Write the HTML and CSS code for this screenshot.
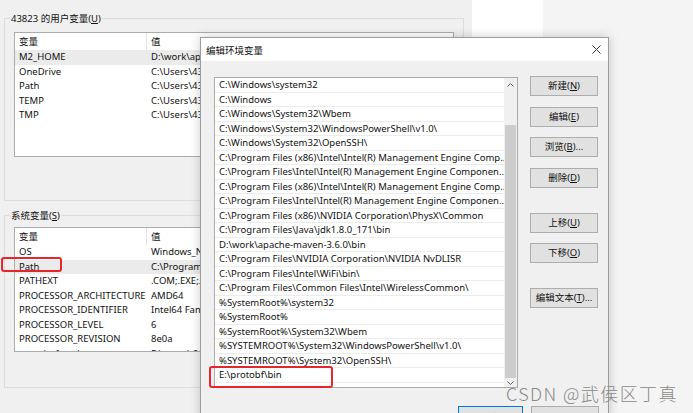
FILE: index.html
```html
<!DOCTYPE html>
<html lang="zh-CN">
<head>
<meta charset="utf-8">
<title>编辑环境变量</title>
<link rel="stylesheet" href="styles.css">
</head>
<body>
<div class="desktop">
  <div class="bg-window">
    <section class="group group-user">
      <span class="group-label">43823 的用户变量(<u>U</u>)</span>
      <div class="var-list var-list-user">
        <div class="var-head"><span class="c1">变量</span><span class="c2">值</span></div>
        <div class="var-row sel"><span class="c1">M2_HOME</span><span class="c2">D:\work\apache-maven-3.6.0</span></div>
        <div class="var-row"><span class="c1">OneDrive</span><span class="c2">C:\Users\43823\OneDrive</span></div>
        <div class="var-row"><span class="c1">Path</span><span class="c2">C:\Users\43823\AppData\Local\Microsoft\WindowsApps</span></div>
        <div class="var-row"><span class="c1">TEMP</span><span class="c2">C:\Users\43823\AppData\Local\Temp</span></div>
        <div class="var-row"><span class="c1">TMP</span><span class="c2">C:\Users\43823\AppData\Local\Temp</span></div>
      </div>
    </section>
    <section class="group group-sys">
      <span class="group-label">系统变量(<u>S</u>)</span>
      <div class="var-list var-list-sys">
        <div class="var-head"><span class="c1">变量</span><span class="c2">值</span></div>
        <div class="var-row"><span class="c1">OS</span><span class="c2">Windows_NT</span></div>
        <div class="var-row sel"><span class="c1">Path</span><span class="c2">C:\Program Files (x86)\Intel\Intel(R) Management</span></div>
        <div class="var-row"><span class="c1">PATHEXT</span><span class="c2">.COM;.EXE;.BAT;.CMD;.VBS;.VBE</span></div>
        <div class="var-row"><span class="c1">PROCESSOR_ARCHITECTURE</span><span class="c2">AMD64</span></div>
        <div class="var-row"><span class="c1">PROCESSOR_IDENTIFIER</span><span class="c2">Intel64 Family 6 Model 158</span></div>
        <div class="var-row"><span class="c1">PROCESSOR_LEVEL</span><span class="c2">6</span></div>
        <div class="var-row"><span class="c1">PROCESSOR_REVISION</span><span class="c2">8e0a</span></div>
        <div class="var-row"><span class="c1">protobuf_path</span><span class="c2">E:\protobf\bin</span></div>
      </div>
    </section>
  </div>

  <div class="back-panel"></div>

  <div class="dialog">
    <div class="titlebar">
      <span class="title">编辑环境变量</span>
      <svg class="close" width="9" height="9" viewBox="0 0 9 9"><path d="M0.5 0.5L8.5 8.5M8.5 0.5L0.5 8.5" stroke="#333" stroke-width="1" fill="none"/></svg>
    </div>
    <div class="dlg-body">
      <div class="path-list">
        <div class="rows">
          <div class="row">C:\Windows\system32</div>
          <div class="row">C:\Windows</div>
          <div class="row">C:\Windows\System32\Wbem</div>
          <div class="row">C:\Windows\System32\WindowsPowerShell\v1.0\</div>
          <div class="row">C:\Windows\System32\OpenSSH\</div>
          <div class="row">C:\Program Files (x86)\Intel\Intel(R) Management Engine Comp...</div>
          <div class="row">C:\Program Files\Intel\Intel(R) Management Engine Componen...</div>
          <div class="row">C:\Program Files (x86)\Intel\Intel(R) Management Engine Comp...</div>
          <div class="row">C:\Program Files\Intel\Intel(R) Management Engine Componen...</div>
          <div class="row">C:\Program Files (x86)\NVIDIA Corporation\PhysX\Common</div>
          <div class="row">C:\Program Files\Java\jdk1.8.0_171\bin</div>
          <div class="row">D:\work\apache-maven-3.6.0\bin</div>
          <div class="row">C:\Program Files\NVIDIA Corporation\NVIDIA NvDLISR</div>
          <div class="row">C:\Program Files\Intel\WiFi\bin\</div>
          <div class="row">C:\Program Files\Common Files\Intel\WirelessCommon\</div>
          <div class="row">%SystemRoot%\system32</div>
          <div class="row">%SystemRoot%</div>
          <div class="row">%SystemRoot%\System32\Wbem</div>
          <div class="row">%SYSTEMROOT%\System32\WindowsPowerShell\v1.0\</div>
          <div class="row">%SYSTEMROOT%\System32\OpenSSH\</div>
          <div class="row row-edit">E:\protobf\bin</div>
        </div>
        <div class="scrollbar">
          <div class="sb-btn sb-up"><svg width="7" height="4" viewBox="0 0 7 4"><path d="M0.5 3.5L3.5 0.5L6.5 3.5" stroke="#606060" fill="none"/></svg></div>
          <div class="sb-track"><div class="sb-thumb"></div></div>
          <div class="sb-btn sb-down"><svg width="7" height="4" viewBox="0 0 7 4"><path d="M0.5 0.5L3.5 3.5L6.5 0.5" stroke="#606060" fill="none"/></svg></div>
        </div>
      </div>
      <div class="btn-col">
        <button class="btn">新建(<u>N</u>)</button>
        <button class="btn">编辑(<u>E</u>)</button>
        <button class="btn">浏览(<u>B</u>)...</button>
        <button class="btn">删除(<u>D</u>)</button>
        <button class="btn btn-sep">上移(<u>U</u>)</button>
        <button class="btn">下移(<u>O</u>)</button>
        <button class="btn btn-sep">编辑文本(<u>T</u>)...</button>
      </div>
    </div>
    <div class="dlg-footer">
      <button class="btn btn-ok">确定</button>
      <button class="btn btn-cancel">取消</button>
    </div>
  </div>

  <div class="mark mark-path"></div>
  <div class="mark mark-proto"></div>
  <div class="watermark">CSDN @武侯区丁真</div>
</div>
</body>
</html>
```

FILE: styles.css
```css
* { box-sizing: border-box; }
html, body { margin: 0; padding: 0; }
body {
  width: 693px;
  height: 413px;
  overflow: hidden;
  background: #f4f4f4;
  font-family: "Noto Sans", "Noto Sans CJK SC", sans-serif;
  font-size: 9.5px;
  color: #111;
}
.desktop { position: relative; width: 693px; height: 413px; overflow: hidden; }

/* background window */
.bg-window {
  position: absolute;
  left: 0; top: 0;
  width: 472px; height: 413px;
  background: #f0f0f0;
  padding: 18px 8px 0 4px;
  display: flex;
  flex-direction: column;
}
.back-panel {
  position: absolute;
  left: 472px; top: 0;
  width: 71px; height: 37px;
  background: #fff;
}
.group {
  border: 1px solid #dcdcdc;
  display: flex;
  flex-direction: column;
}
.group-user { height: 183px; }
.group-sys { height: 173px; margin-top: 14px; }
.group-label {
  align-self: flex-start;
  margin: -8px 0 0 5px;
  padding: 0 1px;
  background: #f0f0f0;
  line-height: 15px;
}
.var-list {
  margin: 6px 9px 0;
  background: #fff;
  border: 1px solid #ababab;
  height: 125px;
  overflow: hidden;
}
.group-sys .var-list { margin-top: 4px; }
.var-head, .var-row { display: flex; white-space: nowrap; }
.var-head { height: 17px; line-height: 17px; }
.var-row { height: 14.5px; line-height: 14.5px; }
.var-row.sel { background: #ebebeb; }
.c1 { width: 132px; padding-left: 4px; flex: none; overflow: hidden; }
.var-head .c1 { border-right: 1px solid #e3e3e3; }
.c2 { padding-left: 4px; width: 53px; flex: none; overflow: hidden; }

/* dialog */
.dialog {
  position: absolute;
  left: 200px; top: 37px;
  width: 409px; height: 400px;
  background: #f0f0f0;
  border: 1px solid #9c9c9c;
  box-shadow: 0 0 10px rgba(0, 0, 0, 0.2);
  display: flex;
  flex-direction: column;
}
.titlebar {
  height: 23px;
  flex: none;
  background: #fff;
  display: flex;
  align-items: center;
  justify-content: space-between;
  padding: 0 7px 0 5px;
}
.close { display: block; }
.dlg-body {
  display: flex;
  padding: 16px 9px 0 13px;
}
.path-list {
  width: 304px;
  height: 311px;
  flex: none;
  border: 1px solid #ababab;
  background: #fff;
  display: flex;
}
.rows { flex: 1; overflow: hidden; }
.row {
  height: 14.5px;
  line-height: 13.5px;
  border-bottom: 1px solid #ececec;
  padding-left: 4px;
  white-space: nowrap;
  overflow: hidden;
}
.scrollbar {
  width: 13px;
  flex: none;
  background: #f0f0f0;
  display: flex;
  flex-direction: column;
}
.sb-btn { display: flex; align-items: center; justify-content: center; flex: none; }
.sb-up { height: 13px; }
.sb-down { height: 9px; }
.sb-btn svg { display: block; }
.sb-track { flex: 1; display: flex; flex-direction: column; padding: 34px 1px 0; }
.sb-thumb { flex: 1; background: #cdcdcd; }

.btn-col {
  width: 68px;
  margin-left: 12px;
  margin-top: -1px;
  display: flex;
  flex-direction: column;
  gap: 10.5px;
}
.btn {
  width: 68px;
  height: 20px;
  padding: 0;
  border: 1px solid #adadad;
  background: #e1e1e1;
  font: inherit;
  color: #111;
  line-height: 18px;
  text-align: center;
  flex: none;
}
.btn-sep { margin-top: 14.5px; }
.dlg-footer {
  display: flex;
  justify-content: flex-end;
  gap: 8px;
  padding-right: 9px;
  margin-top: 18px;
}
.btn-ok { width: 65px; border-color: #0078d7; line-height: 22px; }
.btn-cancel { line-height: 22px; }

/* annotations */
.mark {
  position: absolute;
  border: 2px solid #e6262d;
  border-radius: 3px;
}
.mark-path { left: 1px; top: 257px; width: 61px; height: 15px; }
.mark-proto { left: 209px; top: 366px; width: 124px; height: 22px; }
.watermark {
  position: absolute;
  left: 506px; top: 383px;
  font-family: "Noto Sans CJK SC", sans-serif;
  font-weight: 300;
  font-size: 18px;
  line-height: 20px;
  letter-spacing: 1.4px;
  color: #8a8a8a;
  white-space: nowrap;
}
```
